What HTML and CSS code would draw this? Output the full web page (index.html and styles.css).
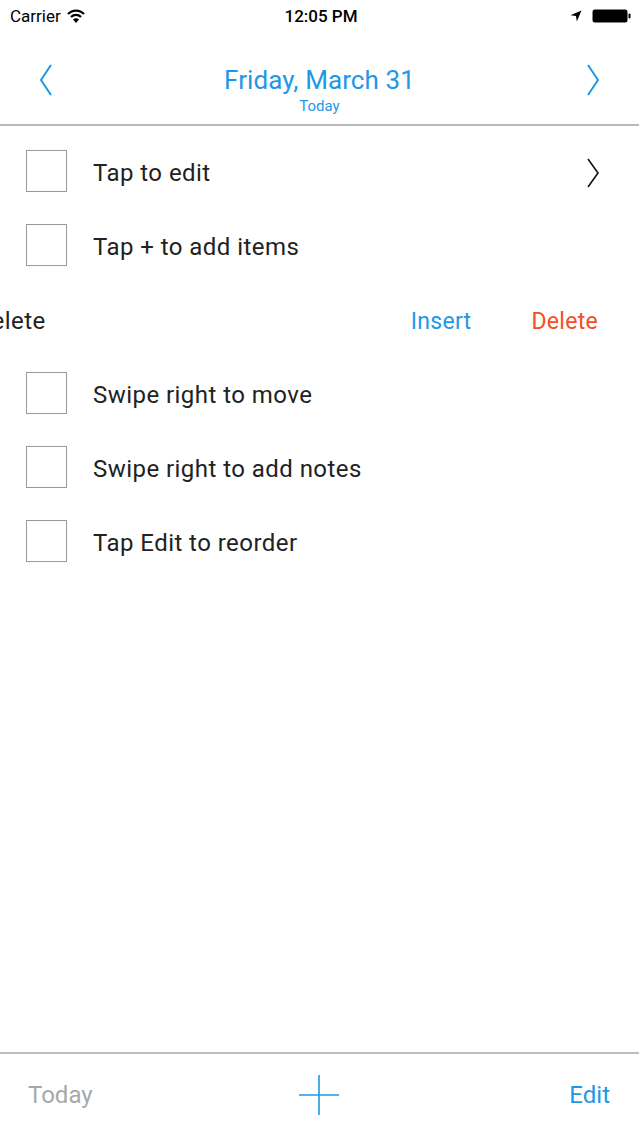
FILE: index.html
```html
<html>
<head>
    <meta charset="UTF-8">
    <meta name="viewport" content="width=device-width, initial-scale=1.0">
    <title>Today list</title>
    <link rel="stylesheet" href="styles.css">
</head>
<body>
    <div class="statusbar">
        <div class="carrier">Carrier
            <svg class="wifi" width="18" height="14" viewBox="0 0 18 14">
                <path d="M1 5 A11 11 0 0 1 17 5" fill="none" stroke="#000" stroke-width="2.2"/>
                <path d="M4 8 A7 7 0 0 1 14 8" fill="none" stroke="#000" stroke-width="2.2"/>
                <path d="M9 14 L6 10.6 A4 4 0 0 1 12 10.6 Z" fill="#000"/>
            </svg>
        </div>
        <div class="clock">12:05 PM</div>
        <div class="status-right">
            <svg width="12" height="12" viewBox="0 0 12 12">
                <path d="M11.5 0.5 L0.5 5.2 L6 6 L6.8 11.5 Z" fill="#000"/>
            </svg>
            <svg width="40" height="14" viewBox="0 0 40 14">
                <rect x="0.5" y="0.5" width="35" height="13" rx="2.5" fill="#000"/>
                <rect x="36.5" y="4.5" width="2" height="5" rx="1" fill="#000"/>
            </svg>
        </div>
    </div>

    <div class="navbar">
        <svg class="chev" width="14" height="32" viewBox="0 0 14 32">
            <polyline points="12,1 2,16 12,31" fill="none" stroke="#1e98e6" stroke-width="2"/>
        </svg>
        <div class="nav-title">
            <div class="date">Friday, March 31</div>
            <div class="sub">Today</div>
        </div>
        <svg class="chev" width="14" height="32" viewBox="0 0 14 32">
            <polyline points="2,1 12,16 2,31" fill="none" stroke="#1e98e6" stroke-width="2"/>
        </svg>
    </div>

    <div class="list">
        <div class="row">
            <div class="box"></div>
            <div class="label">Tap to edit</div>
            <svg class="row-chev" width="14" height="30" viewBox="0 0 14 30">
                <polyline points="2,1 12,15 2,29" fill="none" stroke="#111" stroke-width="1.6"/>
            </svg>
        </div>
        <div class="row">
            <div class="box"></div>
            <div class="label">Tap + to add items</div>
        </div>
        <div class="row swiped">
            <div class="swiped-item">
                <div class="box"></div>
                <div class="label">Swipe left to delete</div>
            </div>
            <div class="actions">
                <span class="insert">Insert</span>
                <span class="delete">Delete</span>
            </div>
        </div>
        <div class="row">
            <div class="box"></div>
            <div class="label">Swipe right to move</div>
        </div>
        <div class="row">
            <div class="box"></div>
            <div class="label">Swipe right to add notes</div>
        </div>
        <div class="row">
            <div class="box"></div>
            <div class="label">Tap Edit to reorder</div>
        </div>
    </div>

    <div class="toolbar">
        <div class="today">Today</div>
        <svg width="42" height="42" viewBox="0 0 42 42">
            <line x1="21" y1="1" x2="21" y2="41" stroke="#1e98e6" stroke-width="1.6"/>
            <line x1="1" y1="21" x2="41" y2="21" stroke="#1e98e6" stroke-width="1.6"/>
        </svg>
        <div class="edit">Edit</div>
    </div>
</body>
</html>
```

FILE: styles.css
```css
body {
    margin: 0;
    width: 639px;
    height: 1136px;
    display: flex;
    flex-direction: column;
    background: #fff;
    font-family: Roboto, "Liberation Sans", sans-serif;
    color: #222;
    overflow: hidden;
}
.statusbar {
    height: 32px;
    display: flex;
    align-items: center;
    justify-content: space-between;
    padding: 0 7px 0 10px;
    font-size: 17px;
    color: #000;
}
.carrier {
    flex: 1;
    display: flex;
    align-items: center;
    gap: 6px;
}
.clock {
    font-weight: 500;
    font-size: 17px;
}
.status-right {
    flex: 1;
    display: flex;
    justify-content: flex-end;
    align-items: center;
    gap: 10px;
}
.navbar {
    height: 94px;
    display: flex;
    align-items: center;
    justify-content: space-between;
    padding: 4px 39px 0 39px;
    border-bottom: 2px solid #b8b8b8;
    box-sizing: border-box;
}
.nav-title {
    text-align: center;
    color: #1e98e6;
    padding-top: 20px;
}
.date {
    font-size: 26px;
    line-height: 32px;
    letter-spacing: 0.1px;
}
.sub {
    font-size: 15px;
    line-height: 20px;
}
.list {
    flex: 1;
    padding-top: 10px;
}
.row {
    height: 74px;
    display: flex;
    align-items: center;
    padding: 0 39px 0 26px;
    overflow: hidden;
}
.box {
    width: 39px;
    height: 40px;
    border: 1.5px solid #9a9a9a;
    flex: none;
    margin-bottom: 5px;
}
.label {
    font-size: 24px;
    letter-spacing: 0.45px;
    margin-left: 26px;
    flex: 1;
    white-space: nowrap;
}
.row-chev {
    flex: none;
}
.swiped {
    padding-left: 0;
    padding-right: 41px;
}
.swiped-item {
    display: flex;
    align-items: center;
    flex: none;
    margin-left: -234px;
}
.actions {
    flex: 1;
    display: flex;
    justify-content: flex-end;
    gap: 60px;
    font-size: 23px;
    letter-spacing: 0.3px;
}
.insert {
    color: #1e98e6;
}
.delete {
    color: #f24f26;
}
.toolbar {
    height: 82px;
    border-top: 2px solid #bdbdbd;
    display: flex;
    align-items: center;
    justify-content: space-between;
    padding: 0 29px 0 28px;
    font-size: 24px;
}
.today {
    color: #a8a8a8;
    width: 80px;
}
.edit {
    color: #1e98e6;
    width: 80px;
    text-align: right;
}
```
